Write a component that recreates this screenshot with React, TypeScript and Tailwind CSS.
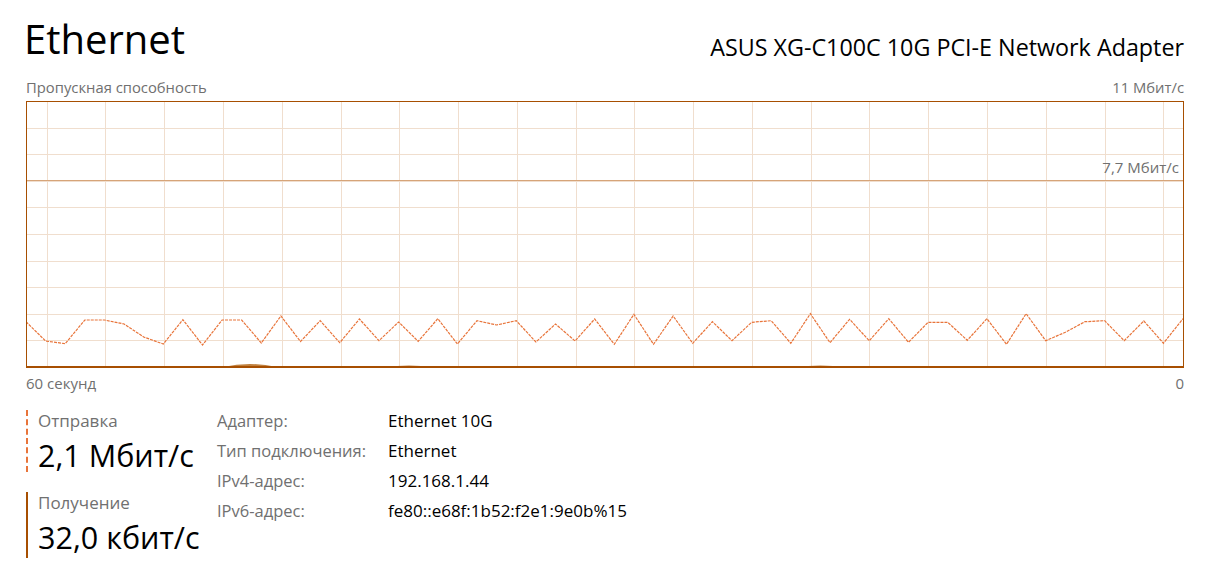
import React from 'react';

const sendYs = [
  321.7, 341, 343.7, 320, 320, 324, 337, 344, 319.7, 345,
  320, 320, 343, 316, 341.5, 320.7, 342.7, 319, 340.7, 322,
  341.3, 318.7, 344, 320.7, 325, 320.7, 342, 324, 341, 319,
  344.3, 314.3, 344.3, 316, 343.3, 321.7, 340.7, 322.3, 320.7, 343.3,
  313.7, 342.7, 319.3, 340.7, 318.7, 342.3, 322.3, 322.3, 340.3, 318.7,
  344.3, 313.7, 340.7, 332.3, 321.7, 320.7, 340.7, 321, 343.3, 318.7,
];

// graph inner area is 1156 x 265, page offset (27, 102)
const W = 1156;
const H = 265;
const OX = 27;
const OY = 102;

const hLines = Array.from({ length: 9 }, (_, i) => Math.round((i + 1) * 26.6) - 0.5);
const vLines = Array.from({ length: 20 }, (_, i) => Math.round(19.7 + i * 58.77) + 0.5);

const sendPoints = sendYs
  .map((y, i) => `${(-1 + i * (W + 1) / 59).toFixed(1)},${(y - OY).toFixed(1)}`)
  .join(' ');

function bump(x1: number, x2: number, peak: number) {
  const a = x1 - OX;
  const b = x2 - OX;
  const mid = (a + b) / 2;
  return `M${a},${H} Q${mid},${H - peak * 2} ${b},${H} Z`;
}

function ThroughputGraph() {
  return (
    <div className="relative h-[267px] border border-[#a74f01]">
      <svg width={W} height={H} className="block">
        {hLines.map(y => (
          <line key={`h${y}`} x1={0} x2={W} y1={y} y2={y} stroke="#f0dece" strokeWidth={1} />
        ))}
        {vLines.map(x => (
          <line key={`v${x}`} x1={x} x2={x} y1={0} y2={H} stroke="#f0dece" strokeWidth={1} />
        ))}
        <line x1={0} x2={W} y1={78.5} y2={78.5} stroke="#d6a479" strokeWidth={1} />
        <polyline
          points={sendPoints}
          fill="none"
          stroke="#e8743a"
          strokeWidth={1.2}
          strokeDasharray="3 1"
        />
        <path d={bump(223, 277, 3)} fill="#b0620f" opacity={0.8} />
        <path d={bump(385, 433, 1.5)} fill="#b0620f" opacity={0.8} />
        <path d={bump(796, 845, 1.5)} fill="#b0620f" opacity={0.8} />
        <line x1={0} x2={W} y1={H - 0.5} y2={H - 0.5} stroke="#a74f01" strokeWidth={1} />
      </svg>
      <span className="absolute right-[4px] top-[55px] text-[15px] leading-[20px] text-[#707070]">
        7,7 Мбит/с
      </span>
    </div>
  );
}

function StatBlock({
  label,
  value,
  dashed,
}: {
  label: string;
  value: string;
  dashed?: boolean;
}) {
  return (
    <div
      className={`border-l-2 pl-[10px] ${
        dashed
          ? 'h-[62px] border-dashed border-[#e8743a]'
          : 'h-[66px] border-solid border-[#a74f01]'
      }`}
    >
      <div className="text-[17px] leading-[22px] text-[#707070]">{label}</div>
      <div className="text-[30.5px] leading-[46px] text-black whitespace-nowrap">{value}</div>
    </div>
  );
}

const details = [
  ['Адаптер:', 'Ethernet 10G'],
  ['Тип подключения:', 'Ethernet'],
  ['IPv4-адрес:', '192.168.1.44'],
  ['IPv6-адрес:', 'fe80::e68f:1b52:f2e1:9e0b%15'],
];

export default function App() {
  return (
    <div
      className="w-[1206px] h-[583px] bg-white pl-[26px] pr-[22px] overflow-hidden"
      style={{ fontFamily: '"Open Sans", "Noto Sans", sans-serif' }}
    >
      <div className="flex items-start justify-between h-[64px]">
        <h1 className="mt-[11px] text-[40px] leading-[56px] font-normal text-black -ml-[2px]">
          Ethernet
        </h1>
        <div className="mt-[32px] text-[23.3px] leading-[30px] text-black">
          ASUS XG-C100C 10G PCI-E Network Adapter
        </div>
      </div>
      <div className="flex justify-between h-[37px] items-start pt-[13px] text-[14.8px] leading-[20px] text-[#707070]">
        <span>Пропускная способность</span>
        <span>11 Мбит/с</span>
      </div>
      <ThroughputGraph />
      <div className="flex justify-between h-[30px] items-center text-[15px] text-[#707070]">
        <span>60 секунд</span>
        <span>0</span>
      </div>
      <div className="flex mt-[12px]">
        <div className="w-[191px] flex flex-col gap-[20px]">
          <StatBlock label="Отправка" value="2,1 Мбит/с" dashed />
          <StatBlock label="Получение" value="32,0 кбит/с" />
        </div>
        <div className="flex flex-col -mt-[4px]">
          {details.map(([k, v]) => (
            <div key={k} className="flex h-[30px] items-center">
              <span className="w-[171px] text-[16.5px] text-[#707070]">{k}</span>
              <span className="text-[17px] text-black">{v}</span>
            </div>
          ))}
        </div>
      </div>
    </div>
  );
}
